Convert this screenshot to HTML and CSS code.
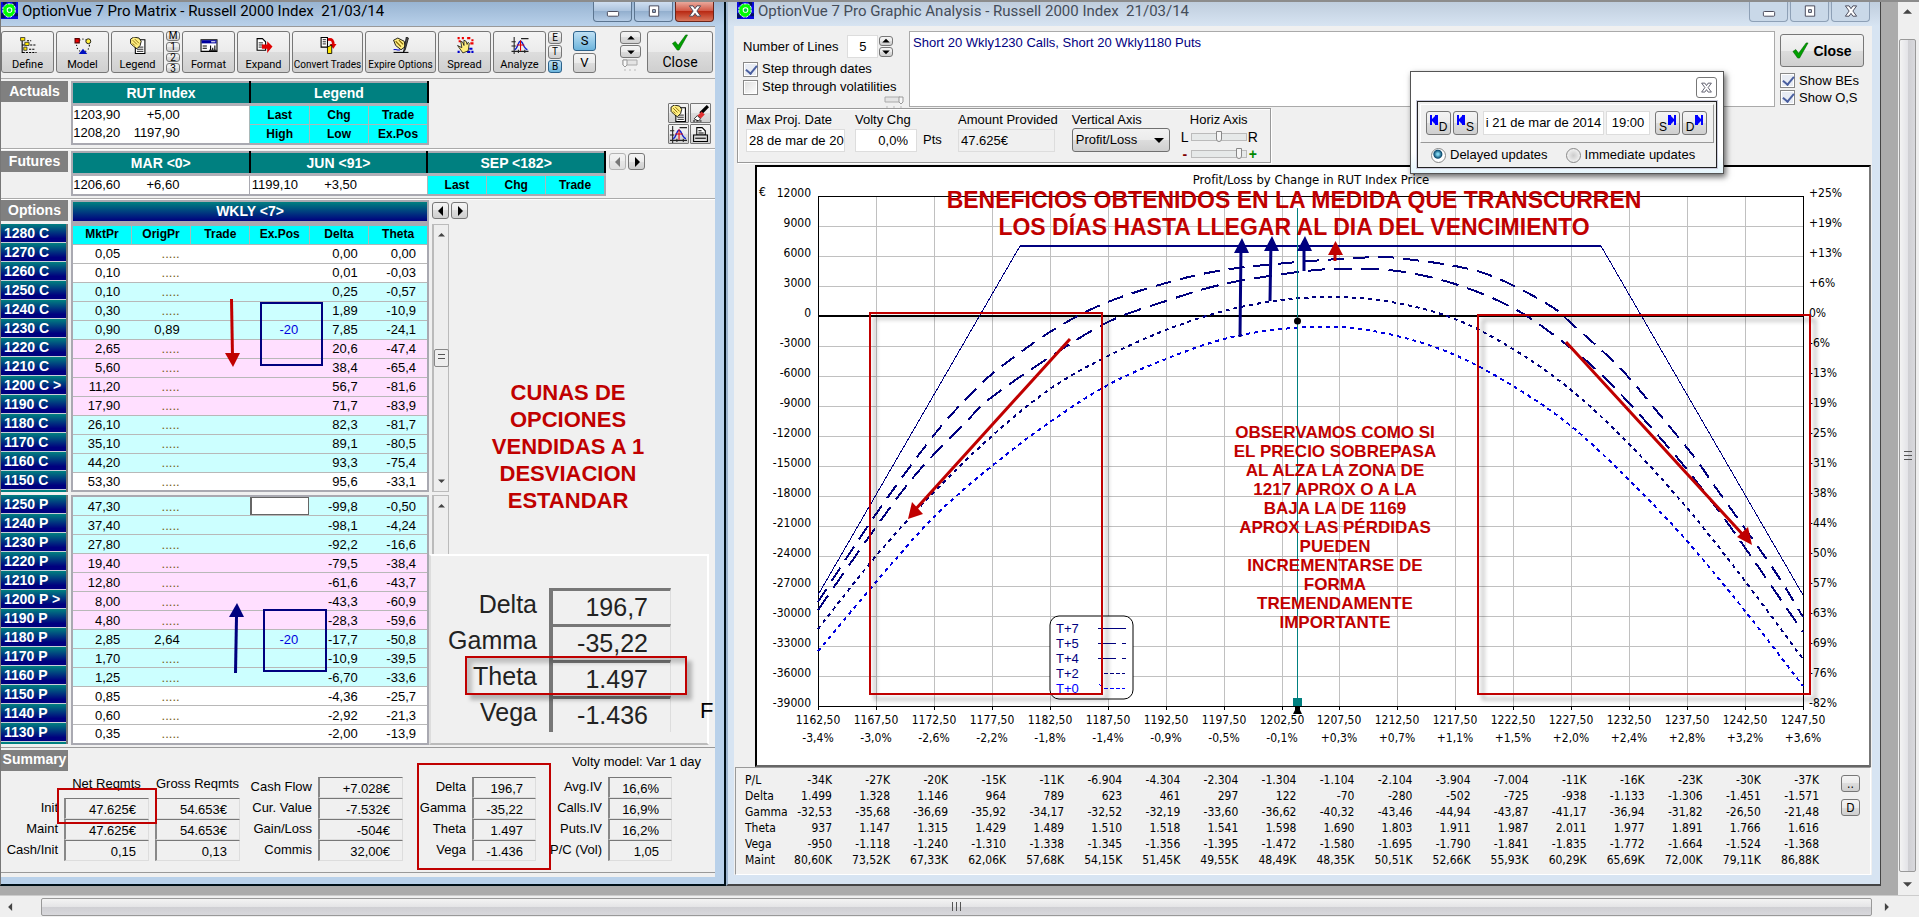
FILE: index.html
```html
<!DOCTYPE html>
<html lang="es">
<head>
<meta charset="utf-8">
<title>OptionVue 7 Pro</title>
<link rel="stylesheet" href="styles.css">
</head>
<body>
<svg class="sprite" aria-hidden="true">
  <symbol id="logo" viewBox="0 0 18 18"><rect width="18" height="18" fill="#0a0ae0"/><path d="M2 0h4v3H2zM12 0h4v4h-4zM0 12h4v5H0zM14 12h4v3h-4z" fill="#001060"/><path d="M4 4l2-2h6l2 2 1 2v5l-2 3-3 2H7l-3-2-2-3V6z" fill="#0f0" stroke="#fff" stroke-width="1" stroke-dasharray="3 1"/><circle cx="9" cy="8.500" r="3" fill="#fff"/><circle cx="9" cy="8.500" r="2" fill="#00d040"/></symbol>
  <symbol id="i-define" viewBox="0 0 16 16"><path d="M2.500 3v11M2 7.500h3M2 14.500h3" stroke="#000" fill="none"/><path d="M1 .5h4v3H1zM5 5h4v3H5zM4 9.500h3v3H4z" fill="#ffe600" stroke="#333" stroke-width=".8"/><path d="M7 3.500h4M10 7.500h6M9 11.500h5M6 14.500h10" stroke="#000" stroke-dasharray="2 1"/></symbol>
  <symbol id="i-model" viewBox="0 0 16 16"><circle cx="8" cy="8" r="6" fill="none" stroke="#000" stroke-dasharray="1 2"/><path d="M.5 1.500h4v4h-4z" fill="#e00" stroke="#500"/><circle cx="13" cy="4" r="2.300" fill="#ffef40" stroke="#000" stroke-width=".8"/><path d="M8 11l4 5H4z" fill="#0010c0"/></symbol>
  <symbol id="i-legend" viewBox="0 0 16 16"><path d="M5.500 2.500h9v13h-9z" fill="#fff" stroke="#000"/><path d="M7 9.500h6M7 11.500h6M7 13.500h6" stroke="#000" stroke-width=".8"/><path d="M1 2l3-2 5 1 2 3-1 4-3 3-3-2-3-3z" fill="#ffee80" stroke="#000" stroke-width=".8"/><path d="M3 3l4 4M5 2l4 4M3 6l2 2" stroke="#806000" stroke-width=".8"/></symbol>
  <symbol id="i-format" viewBox="0 0 16 16"><path d="M.5 2.500h15v11H.5z" fill="#fff" stroke="#000"/><path d="M1 3h14v3H1z" fill="#0000a0"/><path d="M10 4.500h4" stroke="#fff"/><path d="M2 8.500h4M2 10.500h4M9.500 8v4M11.500 10v2M13.500 8v4M8 12.500h7" stroke="#000"/></symbol>
  <symbol id="i-expand" viewBox="0 0 16 16"><path d="M1.500 1.500h5l3 3v8h-8z" fill="#fff" stroke="#000"/><path d="M3 5.500h4M3 7.500h4M3 9.500h3" stroke="#000" stroke-width=".8"/><path d="M6 7h5V4l5 5-5 6v-4H6z" fill="#e00000"/></symbol>
  <symbol id="i-convert" viewBox="0 0 16 16"><path d="M1.500 .5h6v9h-6z" fill="#fff" stroke="#000"/><path d="M3 2.500h3M3 4.500h3M3 6.500h3" stroke="#000" stroke-width=".8"/><path d="M8 2.500c4-1 5 1 5 5" stroke="#d00" stroke-width="2.500" fill="none"/><path d="M9.500 6.500H16l-3 4.500z" fill="#d00"/><path d="M7.500 9.500l4-2v8h-4z" fill="#ffe600" stroke="#000" stroke-width=".8"/></symbol>
  <symbol id="i-expire" viewBox="0 0 16 16"><path d="M1 3l4-2 6 3 1 5-4 3-5-4z" fill="#ffee80" stroke="#000" stroke-width=".8"/><path d="M3 4l5 5M6 3l4 4" stroke="#806000"/><path d="M13 0l2 1-3 11-2 3 1-4z" fill="#555" stroke="#000" stroke-width=".7"/><path d="M1 14.500h14" stroke="#000"/><path d="M1 12c2-1 4 1 6 0" fill="none" stroke="#00c"/></symbol>
  <symbol id="i-spread" viewBox="0 0 16 16"><path d="M1 1h2M5 1h2M10 1h3M14 3h2M2 4h2M13 6h3" stroke="#e00" stroke-width="2"/><path d="M12 11h3M10 14h3M14 14h2M1 14h2" stroke="#00c" stroke-width="2"/><path d="M1 8l4 2-1-6 2 1 1 3V3l2 1 1 3 1-2 1 1-1 7-5 2z" fill="#ffee80" stroke="#000" stroke-width=".7"/></symbol>
  <symbol id="i-analyze" viewBox="0 0 16 16"><path d="M2.500 0v16M0 13.500h16M0 4.500h4M0 8.500h4M6.500 12v3M12.500 12v3M9 1.500h7" stroke="#222" fill="none"/><path d="M3 12c3-1 3-8 5.500-8S11 11 15 12" stroke="#1020d0" fill="none" stroke-width="1.300"/><path d="M8.500 3v10M5 7.500h7" stroke="#e00000"/></symbol>
  <symbol id="i-eraser" viewBox="0 0 16 16"><path d="M15 1L8 8" stroke="#000" stroke-width="3"/><path d="M9 6l3 3-4 4-3-3z" fill="#e03030"/><path d="M5 10l3 3-2 2-4-2z" fill="#fff" stroke="#000" stroke-width=".7"/><path d="M1 15h9" stroke="#000" stroke-dasharray="2 1"/></symbol>
  <symbol id="i-printer" viewBox="0 0 16 16"><path d="M4.500 1.500h5l3 3v4h-8z" fill="#fff" stroke="#000"/><path d="M6 4.500h3M6 6.500h5" stroke="#000"/><path d="M1.500 8.500h13v6h-13z" fill="#ddd" stroke="#000"/><path d="M3 11.500h10" stroke="#000"/></symbol>
  <symbol id="i-check" viewBox="0 0 18 18"><path d="M1 10l3-2 3 4L15 1h2L8 17H6z" fill="#00a000" stroke="#006000" stroke-width=".6"/></symbol>
  <symbol id="i-min" viewBox="0 0 16 16"><rect x="2" y="8" width="12" height="5" rx="1" fill="#fff" stroke="#445"/></symbol>
  <symbol id="i-max" viewBox="0 0 16 16"><path d="M3 2h10v11H3zM6.500 6v3h3V6z" fill="#fff" fill-rule="evenodd" stroke="#445"/></symbol>
  <symbol id="i-x" viewBox="0 0 16 16"><path d="M2 2h4l2 3 2-3h4l-4 5.500 4 5.500h-4l-2-3-2 3H2l4-5.500z" fill="#fff" stroke="#445"/></symbol>
  <symbol id="i-left" viewBox="0 0 8 10"><path d="M6 0v10L1 5z"/></symbol>
  <symbol id="i-right" viewBox="0 0 8 10"><path d="M2 0v10l5-5z"/></symbol>
  <symbol id="i-up" viewBox="0 0 10 8"><path d="M0 6h10L5 1z"/></symbol>
  <symbol id="i-down" viewBox="0 0 10 8"><path d="M0 2h10L5 7z"/></symbol>
  <symbol id="i-skipback" viewBox="0 0 9 10"><path d="M0 0h2v4l3-3V0h3v10H5V9L2 6v4H0z" fill="#00f"/></symbol>
  <symbol id="i-skipfwd" viewBox="0 0 9 10"><path d="M9 0H7v4L4 1V0H1v10h3V9l3-3v4h2z" fill="#00f"/></symbol>
</svg>

<div class="desktop">
  <main class="workspace">

    <section class="window matrix">
      <header class="titlebar">
        <svg class="logo"><use href="#logo"/></svg>
        <h1>OptionVue 7 Pro Matrix - Russell 2000 Index&nbsp; 21/03/14</h1>
        <div class="winbtns">
          <button aria-label="Minimize"><svg><use href="#i-min"/></svg></button>
          <button aria-label="Maximize"><svg><use href="#i-max"/></svg></button>
          <button class="danger" aria-label="Close window"><svg><use href="#i-x"/></svg></button>
        </div>
      </header>
      <div class="client">
        <nav class="toolbar">
          <button class="tool"><svg><use href="#i-define"/></svg>Define</button>
          <button class="tool"><svg><use href="#i-model"/></svg>Model</button>
          <button class="tool"><svg><use href="#i-legend"/></svg>Legend</button>
          <div class="mini four"><button>M</button><button>1</button><button>2</button><button>3</button></div>
          <button class="tool"><svg><use href="#i-format"/></svg>Format</button>
          <button class="tool"><svg><use href="#i-expand"/></svg>Expand</button>
          <button class="tool wide"><svg><use href="#i-convert"/></svg>Convert Trades</button>
          <button class="tool wide"><svg><use href="#i-expire"/></svg>Expire Options</button>
          <button class="tool"><svg><use href="#i-spread"/></svg>Spread</button>
          <button class="tool"><svg><use href="#i-analyze"/></svg>Analyze</button>
          <div class="mini"><button>E</button><button>T</button><button class="on">B</button></div>
          <div class="sv"><button class="on">S</button><button>V</button></div>
          <div class="steps">
            <button aria-label="Up"><svg><use href="#i-up"/></svg></button>
            <button aria-label="Down"><svg><use href="#i-down"/></svg></button>
            <svg class="tick" viewBox="0 0 20 12"><path d="M3 1h14v5H3z" fill="#e4e4e4" stroke="#aaa"/><path d="M3 1h4v5l-2 2-2-2z" fill="#f8f8f8" stroke="#999"/><path d="M5 10v2M10 10v2M15 10v2" stroke="#bbb"/></svg>
          </div>
          <button class="tool closebtn"><svg><use href="#i-check"/></svg>Close</button>
        </nav>

        <section class="band actuals">
          <h2>Actuals</h2>
          <table class="quotes six">
            <thead><tr><th colspan="3">RUT Index</th><th colspan="3">Legend</th></tr></thead>
            <tbody>
              <tr><td>1203,90</td><td>+5,00</td><td></td><td class="key">Last</td><td class="key">Chg</td><td class="key">Trade</td></tr>
              <tr><td>1208,20</td><td>1197,90</td><td></td><td class="key">High</td><td class="key">Low</td><td class="key">Ex.Pos</td></tr>
            </tbody>
          </table>
          <div class="quad">
            <button aria-label="Legend"><svg><use href="#i-legend"/></svg></button>
            <button aria-label="Clear"><svg><use href="#i-eraser"/></svg></button>
            <button aria-label="Graph"><svg><use href="#i-analyze"/></svg></button>
            <button aria-label="Print"><svg><use href="#i-printer"/></svg></button>
          </div>
        </section>

        <section class="band futures">
          <h2>Futures</h2>
          <table class="quotes nine">
            <thead><tr><th colspan="3">MAR &lt;0&gt;</th><th colspan="3">JUN &lt;91&gt;</th><th colspan="3">SEP &lt;182&gt;</th></tr></thead>
            <tbody><tr><td>1206,60</td><td>+6,60</td><td class="edge"></td><td>1199,10</td><td>+3,50</td><td></td><td class="key">Last</td><td class="key">Chg</td><td class="key">Trade</td></tr></tbody>
          </table>
          <div class="pager"><button disabled aria-label="Previous"><svg><use href="#i-left"/></svg></button><button aria-label="Next"><svg><use href="#i-right"/></svg></button></div>
        </section>

        <section class="options">
          <h2>Options</h2>
          <h3 class="expiry">WKLY &lt;7&gt;</h3>
          <div class="pager"><button aria-label="Previous expiry"><svg><use href="#i-left"/></svg></button><button aria-label="Next expiry"><svg><use href="#i-right"/></svg></button></div>
          <ul class="strikes" id="call-strikes"></ul>
          <table class="chain">
            <thead><tr><th>MktPr</th><th>OrigPr</th><th>Trade</th><th>Ex.Pos</th><th>Delta</th><th>Theta</th></tr></thead>
            <tbody id="calls"></tbody>
          </table>
          <div class="vbar"><svg><use href="#i-up"/></svg><span class="grip"></span><svg><use href="#i-down"/></svg></div>
          <p class="note">CUNAS DE OPCIONES VENDIDAS A 1 DESVIACION ESTANDAR</p>
          <ul class="strikes" id="put-strikes"></ul>
          <table class="chain"><tbody id="puts"></tbody></table>
          <div class="vbar"><svg><use href="#i-up"/></svg></div>

          <svg class="marks" viewBox="0 0 430 548" width="430" height="548">
            <g fill="none" stroke="#00007f" stroke-width="2"><path d="M260 104h61v62h-61z"/><path d="M263 411h62v61h-62z"/></g>
            <path d="M230.500 100l1 58" stroke="#c00000" stroke-width="3"/><path d="M224 154h15l-7 14z" fill="#c00000"/>
            <path d="M234.500 474l1-56" stroke="#00007f" stroke-width="3"/><path d="M228 418h15l-7-14z" fill="#00007f"/>
          </svg>
          <div class="zoomed">
            <dl>
              <dt>Delta</dt><dd>196,7</dd>
              <dt>Gamma</dt><dd>-35,22</dd>
              <dt>Theta</dt><dd>1.497</dd>
              <dt>Vega</dt><dd>-1.436</dd>
            </dl>
            <span class="cut">F</span>
            <div class="hilite"></div>
          </div>
        </section>

        <section class="summary">
          <div class="sumhead"><h2>Summary</h2><p>Volty model: Var 1 day</p></div>
          <div class="fields">
            <span></span><span class="col">Net Reqmts</span><span class="col">Gross Reqmts</span><label for="cf">Cash Flow</label><output id="cf">+7.028€</output><label for="de">Delta</label><output id="de">196,7</output><label for="ai">Avg.IV</label><output id="ai">16,6%</output>
            <label for="ni">Init</label><output id="ni">47.625€</output><output>54.653€</output><label for="cv">Cur. Value</label><output id="cv">-7.532€</output><label for="ga">Gamma</label><output id="ga">-35,22</output><label for="ci">Calls.IV</label><output id="ci">16,9%</output>
            <label for="nm">Maint</label><output id="nm">47.625€</output><output>54.653€</output><label for="gl">Gain/Loss</label><output id="gl">-504€</output><label for="th">Theta</label><output id="th">1.497</output><label for="pi">Puts.IV</label><output id="pi">16,2%</output>
            <label for="nc">Cash/Init</label><output id="nc">0,15</output><output>0,13</output><label for="cm">Commis</label><output id="cm">32,00€</output><label for="ve">Vega</label><output id="ve">-1.436</output><label for="pc">P/C (Vol)</label><output id="pc">1,05</output>
          </div>
          <div class="frame net"></div>
          <div class="frame greeks"></div>
        </section>
      </div>
    </section>

    <section class="window analysis">
      <header class="titlebar">
        <svg class="logo"><use href="#logo"/></svg>
        <h1>OptionVue 7 Pro Graphic Analysis - Russell 2000 Index&nbsp; 21/03/14</h1>
        <div class="winbtns">
          <button aria-label="Minimize"><svg><use href="#i-min"/></svg></button>
          <button aria-label="Maximize"><svg><use href="#i-max"/></svg></button>
          <button aria-label="Close window"><svg><use href="#i-x"/></svg></button>
        </div>
      </header>
      <div class="client">
        <div class="setup">
          <div class="lines">
            <div class="numrow">
              <label for="nlines">Number of Lines</label>
              <input id="nlines" type="text" value="5">
              <div class="spin"><button aria-label="More"><svg><use href="#i-up"/></svg></button><button aria-label="Fewer"><svg><use href="#i-down"/></svg></button></div>
            </div>
            <label class="tickrow"><input type="checkbox" checked>Step through dates</label>
            <label class="tickrow"><input type="checkbox">Step through volatilities</label>
            <svg class="knob" viewBox="0 0 20 12"><path d="M1 1h15v5H1z" fill="#e4e4e4" stroke="#aaa"/><path d="M15 1h4v5l-2 2-2-2z" fill="#f8f8f8" stroke="#999"/><path d="M3 10v2M10 10v2M17 10v2" stroke="#bbb"/></svg>
          </div>
          <textarea class="memo" aria-label="Position" spellcheck="false">Short 20 Wkly1230 Calls, Short 20 Wkly1180 Puts</textarea>
          <div class="side">
            <button class="bigclose"><svg><use href="#i-check"/></svg>Close</button>
            <label class="tickrow"><input type="checkbox" checked>Show BEs</label>
            <label class="tickrow"><input type="checkbox" checked>Show O,S</label>
          </div>
        </div>

        <div class="params">
          <div class="param date"><label for="pd">Max Proj. Date</label><input id="pd" type="text" value="28 de mar de 20"></div>
          <div class="param volty"><label for="vc">Volty Chg</label><div class="unit"><input id="vc" type="text" value="0,0%">Pts</div></div>
          <div class="param amount"><label for="ap">Amount Provided</label><input id="ap" type="text" value="47.625€" readonly></div>
          <div class="param axis"><label for="va">Vertical Axis</label><div class="pick"><select id="va"><option>Profit/Loss</option></select><svg><use href="#i-down"/></svg></div></div>
          <div class="param horiz"><span>Horiz Axis</span>
            <div class="slide"><b>L</b><input type="range" min="0" max="100" value="50" aria-label="Horizontal shift"><b>R</b></div>
            <div class="slide"><b class="minus">-</b><input type="range" min="0" max="100" value="92" aria-label="Horizontal zoom"><b class="plus">+</b></div>
          </div>
        </div>

        <div class="chart">
          <svg id="plot" viewBox="757 167 1112 598" role="img" aria-label="Profit/Loss by Change in RUT Index Price">
            <defs><filter id="drop" x="-10%" y="-10%" width="120%" height="120%"><feDropShadow dx="5" dy="5" stdDeviation="2" flood-color="#000" flood-opacity=".35"/></filter></defs>
            <g id="grid"></g>
            <text class="axt mid head" x="1311" y="184">Profit/Loss by Change in RUT Index Price</text>
            <text class="axt" x="759" y="196">€</text>
            <g fill="none" stroke="#00007f" shape-rendering="crispEdges">
              <path stroke-width="1" d="M818 595L1020 246M1601 246L1803 595"/>
              <path stroke-width="2" d="M1020 246H1601"/>
              <path id="t5" stroke-width="2" stroke-dasharray="16 9"/>
              <path id="t4" stroke-width="2" stroke-dasharray="18 9"/>
              <path id="t2" stroke-width="2" stroke-dasharray="4 4"/>
              <path id="t0" stroke="#0000e0" stroke-width="2" stroke-dasharray="4 4"/>
            </g>
            <path d="M1297.500 208V700" stroke="#008080"/>
            <circle cx="1297.500" cy="321" r="3.500"/>
            <path d="M1293 698h9v8h-9z" fill="#008080"/><path d="M1295 707h5v3l2 4h-9l2-4z"/>
            <g class="key">
              <rect x="1050" y="616" width="83" height="83" rx="9" fill="#fff" stroke="#000"/>
              <text x="1056" y="633">T+7</text><text x="1056" y="648">T+5</text><text x="1056" y="663">T+4</text><text x="1056" y="678">T+2</text><text x="1056" y="693" class="now">T+0</text>
              <path d="M1098 628.500h28M1098 643.500h18m6 0h4M1098 658.500h18m6 0h4" stroke="#00007f" fill="none"/>
              <path d="M1104 673.500h21" stroke="#00007f" stroke-dasharray="4 2"/><path d="M1104 688.500h21" stroke="#00f" stroke-dasharray="4 2"/><path d="M1099 684l2 2" stroke="#00f"/>
            </g>
            <g class="say big"><text x="1294" y="208">BENEFICIOS OBTENIDOS EN LA MEDIDA QUE TRANSCURREN</text><text x="1294" y="235">LOS DÍAS HASTA LLEGAR AL DIA DEL VENCIMIENTO</text></g>
            <g class="say" id="warn"></g>
            <g fill="none" stroke="#c00000" stroke-width="2" filter="url(#drop)"><path d="M870 313h232v381H870z"/><path d="M1478 315h332v379h-332z"/></g>
            <g stroke="#c00000" stroke-width="3"><path d="M1070 339L914 511M1566 342l179 195"/><path d="M1335 261v-12" /></g>
            <path d="M908 519l4-17 11 12zM1752 545l-15-8 11-10zM1328 255h15l-7.500-14z" fill="#c00000"/>
            <g stroke="#00007f" stroke-width="3"><path d="M1240 337l1-90M1270 301l1-60M1304 271v-30"/></g>
            <path d="M1234 253h15l-7-15zM1264 251h15l-7-15zM1297 251h15l-7-15z" fill="#00007f"/>
          </svg>
        </div>

        <div class="risk">
          <table><tbody id="risk"></tbody></table>
          <div class="riskbtns"><button>..</button><button>D</button></div>
        </div>
      </div>

      <aside class="popup">
        <button class="dismiss" aria-label="Close panel"><svg><use href="#i-x"/></svg></button>
        <div class="inner">
          <div class="stepper">
            <button aria-label="Back one day"><svg><use href="#i-skipback"/></svg><sub>D</sub></button>
            <button aria-label="Back one step"><svg><use href="#i-skipback"/></svg><sub>S</sub></button>
            <input class="day" type="text" value="i 21 de mar de 2014" aria-label="Date">
            <input class="hour" type="text" value="19:00" aria-label="Time">
            <button aria-label="Forward one step"><sub>S</sub><svg><use href="#i-skipfwd"/></svg></button>
            <button aria-label="Forward one day"><sub>D</sub><svg><use href="#i-skipfwd"/></svg></button>
          </div>
          <div class="radios">
            <label><input type="radio" name="upd" checked>Delayed updates</label>
            <label><input type="radio" name="upd">Immediate updates</label>
          </div>
        </div>
      </aside>
    </section>
  </main>

  <div class="deskbar vertical"><svg><use href="#i-up"/></svg><span class="thumb"><i></i></span><svg><use href="#i-down"/></svg></div>
  <div class="deskbar horizontal"><svg><use href="#i-left"/></svg><span class="thumb"><i></i></span><svg><use href="#i-right"/></svg></div>
</div>
<script src="app.js"></script>
</body>
</html>
```

FILE: styles.css
```css
* { box-sizing: border-box; }
html, body { margin: 0; height: 100%; }
body { font: 13px/16px "Liberation Sans", Arial, sans-serif; color: #000; background: #ababab; }
h1, h2, h3, p, ul, dl, dd { margin: 0; padding: 0; font-weight: normal; }
ul { list-style: none; }
table { border-collapse: collapse; table-layout: fixed; }
td, th { padding: 0; }
button, input, select, textarea { font: inherit; color: inherit; margin: 0; padding: 0; }
button { display: flex; align-items: center; justify-content: center; border: 1px solid #777; border-radius: 3px; background: linear-gradient(#f4f4f4, #ebebeb 50%, #dddddd 50%, #cfcfcf); }
svg { display: block; flex: none; }
.sprite { position: absolute; width: 0; height: 0; }

.desktop { display: grid; grid-template-columns: 1fr 21px; grid-template-rows: 1fr 22px; min-height: 100vh; border-top: 2px solid #8c8c8c; }
.workspace { display: grid; grid-template-columns: minmax(0, 726fr) minmax(0, 1155fr); padding: 0 17px 9px 0; }
.window { display: flex; flex-direction: column; position: relative; min-width: 0; }
.matrix { background: #b9d1ea; border-left: 1px solid #777; border-right: 2px solid #001018; border-bottom: 2px solid #001018; padding: 0 9px 7px 0; }
.analysis { background: #d7e4f2; border-left: 2px solid #9fb6cf; border-right: 1px solid #444; border-bottom: 2px solid #444; padding: 0 8px 9px 6px; }
.client { flex: 1; background: #f0f0f0; }

.titlebar { display: flex; height: 24px; align-items: flex-start; gap: 4px; }
.matrix .titlebar { background: linear-gradient(#98b4d2, #b9d1ea); margin-right: -9px; }
.analysis .titlebar { background: linear-gradient(#bfcddd, #d7e4f2); margin-left: -6px; padding-left: 9px; color: #444c58; margin-right: -8px; }
.titlebar h1 { flex: 1; font: 15px/19px Roboto, "Open Sans", sans-serif; white-space: nowrap; }
.logo { width: 17px; height: 17px; }
.winbtns { display: flex; gap: 2px; margin-right: 10px; }
.winbtns button { width: 39px; height: 20px; border: 1px solid #5c7590; border-top: 0; border-radius: 0 0 4px 4px; background: linear-gradient(#cfdef0, #a9c1dc 50%, #93afce 50%, #b5cce6); }
.analysis .winbtns button { background: #c9d8e8; border-color: #8ea0b6; }
.winbtns svg { width: 16px; height: 15px; }
.winbtns .danger { background: linear-gradient(#e9a89b, #cf5240 50%, #b92a14 50%, #d8765c); border-color: #6b2418; }

.toolbar { display: flex; align-items: flex-start; gap: 2px; height: 53px; padding: 5px 2px 0 0; border-bottom: 1px solid #aaa; box-shadow: inset 0 1px #999; }
.tool { flex-direction: column; gap: 4px; width: 53px; height: 42px; font: 11px/13px Roboto, "Open Sans", sans-serif; white-space: nowrap; padding-top: 3px; }
.tool svg { width: 18px; height: 17px; }
.tool.wide { width: 71px; font-size: 10px; }
.mini { display: flex; flex-direction: column; gap: 1px; width: 14px; height: 42px; }
.mini button { flex: 1; min-height: 0; font: 10px/9px Roboto, sans-serif; border-radius: 3px; }
.on { background: linear-gradient(#bfe0f4, #6cb4dc); border-color: #2c628b; }
.sv { display: flex; flex-direction: column; gap: 2px; margin-left: 9px; width: 23px; }
.sv button { height: 20px; font: 13px/16px Roboto, sans-serif; }
.steps { display: flex; flex-direction: column; gap: 1px; width: 21px; margin-left: auto; }
.steps button { height: 13px; }
.steps button svg { width: 8px; height: 6px; }
.steps .tick { width: 20px; height: 12px; }
.closebtn { width: 66px; margin-left: 4px; font-size: 14px; line-height: 16px; gap: 3px; padding: 0; }

h2 { background: #808080; color: #fff; font: bold 14px/20px "Liberation Sans", Arial, sans-serif; text-align: center; width: 67px; height: 21px; }
.band { display: grid; grid-template-columns: 67px auto 1fr; column-gap: 3px; align-items: start; padding-top: 2px; border-bottom: 1px solid #aaa; box-shadow: 0 1px #fff; }
.actuals { height: 70px; }
.futures { height: 50px; }
.quotes { border: 2px solid #a9a9b1; background: #fff; }
.six { width: 358px; }
.nine { width: 535px; }
.quotes th { height: 22px; background: #008080; color: #fff; font-size: 14px; line-height: 18px; border-right: 2px solid #000; border-bottom: 3px solid #b0b0b8; }
.quotes td { height: 20px; text-align: right; padding-right: 11px; line-height: 18px; }
.quotes tr + tr td { height: 19px; }
.quotes .key { background: #0ff; text-align: center; padding: 0; font-weight: bold; font-size: 12px; border: 1px solid #a9b9b9; }
.quotes .edge { border-right: 1px solid #a9a9b1; }
.quad { justify-self: end; display: grid; grid-template-columns: 21px 21px; gap: 1px; margin: 22px 4px 0 0; }
.quad button { height: 20px; border-radius: 1px; }
.quad svg { width: 17px; height: 17px; }
.pager { display: flex; gap: 2px; padding-top: 2px; }
.pager button { width: 17px; height: 17px; }
.pager svg { width: 8px; height: 10px; }
.pager button:disabled { opacity: .5; }

.options { position: relative; display: grid; grid-template-columns: 67px 358px 17px 1fr; column-gap: 3px; align-items: start; padding: 1px 0 2px; border-bottom: 1px solid #999; }
.options .pager { grid-column: 3 / 5; }
.expiry { background: linear-gradient(#008080, #00007f); color: #fff; text-align: center; font: bold 14px/19px "Liberation Sans", Arial, sans-serif; border: 2px solid #a9a9b1; border-bottom-width: 3px; height: 24px; }
.strikes { border-right: 2px solid #777; background: #008080; padding-bottom: 2px; grid-column: 1; }
.strikes li { height: 19px; padding-left: 3px; color: #fff; font: bold 14px/18px "Liberation Sans", Arial, sans-serif; background: linear-gradient(#008080, #00007f 80%); border-bottom: 1px solid #c8d0d8; white-space: nowrap; }
#put-strikes, #put-strikes ~ table, #put-strikes ~ .vbar { margin-top: 3px; }
.chain { width: 358px; border: 2px solid #a9a9b1; background: #fff; grid-column: 2; }
.chain th { height: 19px; background: #0ff; font-size: 12px; line-height: 17px; border: 1px solid #a9b9b9; }
.chain td { height: 19px; text-align: right; padding-right: 11px; line-height: 17px; border-bottom: 1px solid #b8b8b8; }
.chain .dots { color: #776020; }
.chain .pos { color: #00d; }
.cyan { background: #ccffff; }
.pink { background: #ffdfff; }
.chain input { display: block; width: 59px; height: 18px; border: 1px solid #666; border-left-width: 2px; background: #fff; margin: 0; }
.chain td.cell { padding: 0; }
.vbar { grid-column: 3; align-self: stretch; display: flex; flex-direction: column; justify-content: space-between; align-items: center; border: 1px solid #bbb; border-left-width: 2px; background: #eee; padding: 7px 0; }
.vbar svg { width: 7px; height: 6px; fill: #444; }
.grip { width: 15px; height: 18px; border: 1px solid #888; border-radius: 2px; background: repeating-linear-gradient(#555 0 1px, #eee 1px 4px) content-box; padding: 4px 3px; }
.note { grid-column: 4; grid-row: 2 / 4; color: #c00000; font: bold 22px/27px "Liberation Sans", Arial, sans-serif; text-align: center; width: 180px; margin: 155px 0 0 26px; }
.options #call-strikes, #call-strikes + .chain, #call-strikes + .chain + .vbar { grid-row: 2; }
.options #put-strikes, #put-strikes + .chain, #put-strikes + .chain + .vbar { grid-row: 3; }
.marks { position: absolute; left: 0; top: 0; pointer-events: none; }
.zoomed { position: absolute; left: 428px; top: 355px; width: 280px; height: 191px; background: #f0f0f0; border: 2px solid #fff; border-left-color: #ddd; border-bottom-color: #bbb; padding: 32px 0 0 8px; }
.zoomed dl { display: grid; grid-template-columns: 98px 122px; column-gap: 12px; font-size: 25px; line-height: 32px; color: #222; grid-auto-rows: 36px; }
.zoomed dt { text-align: right; }
.zoomed dd { text-align: right; padding-right: 22px; border-top: 3px solid #777; border-left: 4px solid #777; border-right: 1px solid #ddd; }
.cut { position: absolute; left: 269px; top: 138px; font-size: 22px; line-height: 34px; }
.hilite { position: absolute; left: 34px; top: 100px; width: 222px; height: 39px; border: 2px solid #c00000; box-shadow: 5px 5px 4px rgba(0,0,0,.25), inset 5px 5px 4px rgba(0,0,0,.2); }

.summary { position: relative; padding-top: 2px; border-bottom: 1px solid #999; height: 125px; }
.sumhead { display: flex; justify-content: space-between; padding-right: 14px; }
.sumhead h2 { line-height: 19px; }
.sumhead p { padding-top: 4px; }
.fields { display: grid; grid-template-columns: 55px 85px 85px 66px 85px 57px 64px 60px 64px; column-gap: 6px; grid-auto-rows: 21px; padding: 6px 0 0 2px; white-space: nowrap; }
.fields label { text-align: right; justify-self: end; line-height: 20px; }
.fields .col { text-align: center; line-height: 14px; }
.fields output { text-align: right; padding-right: 12px; line-height: 21px; border-top: 1px solid #777; border-left: 2px solid #888; border-right: 1px solid #ddd; border-bottom: 1px solid #ddd; }
.frame { position: absolute; border: 2px solid #c00000; }
.net { left: 56px; top: 40px; width: 100px; height: 36px; }
.greeks { left: 416px; top: 15px; width: 134px; height: 107px; }

.setup { display: grid; grid-template-columns: 167px 1fr 84px; column-gap: 5px; padding: 5px 8px 0 3px; height: 82px; }
.lines { padding: 4px 0 0 6px; position: relative; }
.numrow { display: flex; align-items: center; gap: 9px; }
.numrow input { width: 31px; height: 23px; text-align: center; border: 1px solid #ddd; background: #fff; }
.spin { display: flex; flex-direction: column; gap: 1px; width: 14px; margin-left: -8px; }
.spin button { height: 10px; }
.spin svg { width: 8px; height: 6px; }
.tickrow { display: flex; align-items: center; gap: 4px; height: 17px; white-space: nowrap; }
.lines .tickrow { height: 18px; }
.lines .tickrow:nth-of-type(1) { margin-top: 2px; }
input[type=checkbox] { appearance: none; width: 15px; height: 15px; border: 1px solid #888; background: linear-gradient(135deg, #ddd, #fff); box-shadow: inset 0 0 0 1px #fff; flex: none; }
input[type=checkbox]:checked { background: #e8ecf4; }
input[type=checkbox]:checked::after { content: ""; display: block; width: 5px; height: 9px; margin: 0 0 0 4px; border: solid #4a5fa0; border-width: 0 2px 2px 0; transform: rotate(40deg); }
.knob { position: absolute; right: 0; bottom: 0; width: 20px; height: 12px; }
.memo { resize: none; border: 1px solid #aaa; background: #fff; color: #00007f; padding: 3px; height: 76px; width: 100%; }
.side .bigclose { width: 84px; height: 33px; margin: 3px 0 5px; gap: 4px; font-weight: bold; font-size: 14px; }
.bigclose svg { width: 17px; height: 17px; }

.params { display: flex; gap: 10px; width: 534px; height: 55px; border: 1px solid #999; box-shadow: 1px 1px #fff, inset 1px 1px #fff; margin: 0 0 2px 3px; padding: 3px 8px 0; white-space: nowrap; }
.param label { display: block; }
.param input[type=text] { display: block; height: 23px; margin-top: 1px; border: 1px solid #ddd; background: #fff; }
.date input { width: 99px; padding-left: 2px; }
.volty { width: 93px; }
.unit { display: flex; align-items: center; gap: 6px; }
.volty input[type=text] { width: 62px; text-align: right; padding-right: 8px; }
.amount input[type=text] { width: 97px; background: #f0f0f0; padding-left: 2px; }
.axis { margin-left: 4px; }
.pick { position: relative; width: 98px; }
.pick select { appearance: none; width: 98px; height: 24px; padding-left: 3px; border: 1px solid #707070; border-radius: 3px; background: linear-gradient(#f2f2f2, #ebebeb 50%, #ddd 50%, #cfcfcf); }
.pick svg { position: absolute; right: 6px; top: 8px; width: 10px; height: 8px; pointer-events: none; }
.horiz { text-align: center; line-height: 16px; }
.slide { display: flex; align-items: center; gap: 1px; height: 17px; }
.slide b { font-weight: normal; width: 10px; font-size: 14px; }
.slide .minus { color: #800000; font-weight: bold; }
.slide .plus { color: #080; font-weight: bold; }
input[type=range] { appearance: none; width: 56px; height: 8px; border: 1px solid #bbb; background: #e6e9e9; }
input[type=range]::-webkit-slider-thumb { appearance: none; width: 6px; height: 11px; border: 1px solid #888; border-radius: 0 0 3px 3px; background: #f6f6f6; }

.chart { margin-left: 21px; margin-right: 1px; border: 2px solid #000; border-right-color: #777; border-bottom-color: #666; background: #fff; }
.chart > svg { width: 100%; height: auto; }
.axt { font: 12px "DejaVu Sans Condensed", "Open Sans", sans-serif; }
.head { font-size: 13px; }
.mid { text-anchor: middle; }
.end { text-anchor: end; }
.key text { font: 13px "Liberation Sans", Arial, sans-serif; fill: #00007f; }
.key .now { fill: #00f; }
.say text { font: bold 17px "Liberation Sans", Arial, sans-serif; fill: #c00000; text-anchor: middle; }
.say.big text { font-size: 23px; }

.risk { display: flex; border: 1px solid #999; border-right-color: #fff; border-bottom-color: #fff; padding: 4px 10px 6px 9px; margin: 0 1px; font: 12px/16px "DejaVu Sans Condensed", "Open Sans", sans-serif; }
.risk table { flex: 1; }
.risk tr { height: 16px; }
.risk th { text-align: left; font-weight: normal; width: 45px; }
.risk td { text-align: right; }
.risk td:nth-child(2) { width: 42px; }
.riskbtns { display: flex; flex-direction: column; gap: 7px; width: 19px; margin: 3px 0 0 22px; }
.riskbtns button { height: 17px; font-size: 12px; line-height: 12px; }

.popup { position: absolute; right: 156px; top: 69px; width: 314px; height: 103px; background: linear-gradient(#fff 80%, #e4f4fb); border: 1px solid #555; box-shadow: 2px 3px 6px rgba(0,0,0,.6); padding: 5px 6px 6px; }
.dismiss { width: 21px; height: 21px; margin-left: auto; background: #fff; }
.dismiss svg { width: 13px; height: 14px; }
.popup .inner { border: 1px solid #222; outline: 1px solid #ccd; background: #f0f0f0; height: 67px; margin-top: 3px; padding: 2px; }
.stepper { display: flex; align-items: center; gap: 2px; height: 39px; border: 1px solid #999; border-left-color: #fff; border-top-color: #fff; padding: 0 5px 2px; }
.stepper button { width: 25px; height: 24px; }
.stepper button svg { width: 9px; height: 10px; margin-bottom: 5px; }
.stepper sub { font-size: 12px; line-height: 12px; margin-top: 8px; vertical-align: baseline; }
.stepper input { height: 24px; border: 1px solid #ddd; background: #fff; text-align: center; }
.day { width: 121px; margin-left: 3px; }
.hour { width: 44px; margin-right: 3px; }
.radios { display: flex; gap: 18px; padding: 4px 0 0 11px; white-space: nowrap; }
.radios label { display: flex; align-items: center; gap: 4px; }
input[type=radio] { appearance: none; width: 15px; height: 15px; border: 1px solid #888; border-radius: 50%; background: radial-gradient(#ccc, #fff); }
input[type=radio]:checked { background: radial-gradient(circle at 45% 40%, #7fd4ee 0 1px, #0a4a70 4px, #fff 5px); }

.deskbar { display: flex; align-items: center; background: #efefef; }
.deskbar svg { width: 9px; height: 8px; fill: #444; }
.deskbar .thumb { flex: 1; border: 1px solid #999; border-radius: 2px; display: flex; align-items: center; justify-content: center; }
.vertical { flex-direction: column; padding: 6px 3px 7px 1px; gap: 8px; }
.vertical .thumb { width: 17px; margin-top: 15px; background: linear-gradient(90deg, #f3f3f3, #e4e4e8 50%, #cfcfd3 50%, #d8d8dc); }
.vertical i { width: 8px; height: 10px; background: repeating-linear-gradient(#555 0 1px, transparent 1px 4px); }
.horizontal { grid-column: 1 / 3; padding: 0 28px 0 6px; gap: 10px; border-top: 1px solid #ccc; }
.horizontal .thumb { height: 18px; margin-left: 16px; background: linear-gradient(#f3f3f3, #e4e4e6 50%, #cfcfd3 50%, #d8d8dc); }
.horizontal i { width: 10px; height: 9px; background: repeating-linear-gradient(90deg, #555 0 1px, transparent 1px 4px); }
```

FILE: app.js
```js
const calls = [
  ["1270 C", "0,05", "", "", "0,00", "0,00", ""],
  ["1260 C", "0,10", "", "", "0,01", "-0,03", ""],
  ["1250 C", "0,10", "", "", "0,25", "-0,57", "cyan"],
  ["1240 C", "0,30", "", "", "1,89", "-10,9", "cyan"],
  ["1230 C", "0,90", "0,89", "-20", "7,85", "-24,1", "cyan"],
  ["1220 C", "2,65", "", "", "20,6", "-47,4", "pink"],
  ["1210 C", "5,60", "", "", "38,4", "-65,4", "pink"],
  ["1200 C >", "11,20", "", "", "56,7", "-81,6", "pink"],
  ["1190 C", "17,90", "", "", "71,7", "-83,9", "pink"],
  ["1180 C", "26,10", "", "", "82,3", "-81,7", "cyan"],
  ["1170 C", "35,10", "", "", "89,1", "-80,5", "cyan"],
  ["1160 C", "44,20", "", "", "93,3", "-75,4", "cyan"],
  ["1150 C", "53,30", "", "", "95,6", "-33,1", ""]
];
const puts = [
  ["1250 P", "47,30", "", "edit", "-99,8", "-0,50", "cyan"],
  ["1240 P", "37,40", "", "", "-98,1", "-4,24", "cyan"],
  ["1230 P", "27,80", "", "", "-92,2", "-16,6", "cyan"],
  ["1220 P", "19,40", "", "", "-79,5", "-38,4", "pink"],
  ["1210 P", "12,80", "", "", "-61,6", "-43,7", "pink"],
  ["1200 P >", "8,00", "", "", "-43,3", "-60,9", "pink"],
  ["1190 P", "4,80", "", "", "-28,3", "-59,6", "pink"],
  ["1180 P", "2,85", "2,64", "-20", "-17,7", "-50,8", "cyan"],
  ["1170 P", "1,70", "", "", "-10,9", "-39,5", "cyan"],
  ["1160 P", "1,25", "", "", "-6,70", "-33,6", "cyan"],
  ["1150 P", "0,85", "", "", "-4,36", "-25,7", ""],
  ["1140 P", "0,60", "", "", "-2,92", "-21,3", ""],
  ["1130 P", "0,35", "", "", "-2,00", "-13,9", ""]
];
const byId = id => document.getElementById(id);

function chainRow([strike, mkt, orig, pos, delta, theta, tone]) {
  const posCell = pos === "edit"
    ? '<td class="cell"><input type="text" aria-label="Position ' + strike + '"></td>'
    : '<td class="pos">' + pos + "</td>";
  return `<tr class="${tone}"><td>${mkt}</td><td class="${orig ? "" : "dots"}">${orig || "....."}</td><td></td>${posCell}<td>${delta}</td><td>${theta}</td></tr>`;
}
byId("calls").innerHTML = calls.map(chainRow).join("");
byId("puts").innerHTML = puts.map(chainRow).join("");
byId("call-strikes").innerHTML = ["1280 C", ...calls.map(r => r[0])].map(s => `<li>${s.replace(">", "&gt;")}</li>`).join("");
byId("put-strikes").innerHTML = puts.map(r => `<li>${r[0].replace(">", "&gt;")}</li>`).join("");

const risk = {
  "P/L": "-34K -27K -20K -15K -11K -6.904 -4.304 -2.304 -1.304 -1.104 -2.104 -3.904 -7.004 -11K -16K -23K -30K -37K",
  "Delta": "1.499 1.328 1.146 964 789 623 461 297 122 -70 -280 -502 -725 -938 -1.133 -1.306 -1.451 -1.571",
  "Gamma": "-32,53 -35,68 -36,69 -35,92 -34,17 -32,52 -32,19 -33,60 -36,62 -40,32 -43,46 -44,94 -43,87 -41,17 -36,94 -31,82 -26,50 -21,48",
  "Theta": "937 1.147 1.315 1.429 1.489 1.510 1.518 1.541 1.598 1.690 1.803 1.911 1.987 2.011 1.977 1.891 1.766 1.616",
  "Vega": "-950 -1.118 -1.240 -1.310 -1.338 -1.345 -1.356 -1.395 -1.472 -1.580 -1.695 -1.790 -1.841 -1.835 -1.772 -1.664 -1.524 -1.368",
  "Maint": "80,60K 73,52K 67,33K 62,06K 57,68K 54,15K 51,45K 49,55K 48,49K 48,35K 50,51K 52,66K 55,93K 60,29K 65,69K 72,00K 79,11K 86,88K"
};
byId("risk").innerHTML = Object.entries(risk).map(([name, row]) =>
  `<tr><th scope="row">${name}</th>${row.split(" ").map(v => `<td>${v}</td>`).join("")}</tr>`).join("");

const left = 818, right = 1803, top0 = 196, bottom = 706;
const stepX = (right - left) / 17;
const pctX = "-3,4% -3,0% -2,6% -2,2% -1,8% -1,4% -0,9% -0,5% -0,1% +0,3% +0,7% +1,1% +1,5% +2,0% +2,4% +2,8% +3,2% +3,6%".split(" ");
const pctY = "+25% +19% +13% +6% 0% -6% -13% -19% -25% -31% -38% -44% -50% -57% -63% -69% -76% -82%".split(" ");
let grid = "";
for (let i = 0; i < 18; i++) {
  const x = Math.round(left + i * stepX), y = top0 + i * 30;
  if (i > 0 && i < 17) grid += `<path d="M${x} ${top0}V${bottom}M${left} ${y}H${right}" stroke="#c0c0c0" shape-rendering="crispEdges"/>`;
  grid += `<path d="M${x} ${bottom}v4" stroke="#000" shape-rendering="crispEdges"/>`;
  grid += `<text class="axt mid" x="${x}" y="724">${(1162.5 + i * 5).toFixed(2).replace(".", ",")}</text>`;
  grid += `<text class="axt mid" x="${x}" y="742">${pctX[i]}</text>`;
  grid += `<text class="axt end" x="811" y="${y + 1}">${12000 - i * 3000}</text>`;
  grid += `<text class="axt" x="1809" y="${y + 1}">${pctY[i]}</text>`;
}
grid += `<g shape-rendering="crispEdges"><path d="M${left} ${top0}H${right}V${bottom}H${left}z" fill="none" stroke="#000"/><path d="M${left} 316H${right}" stroke="#000" stroke-width="2"/></g>`;
byId("grid").innerHTML = grid;

const curves = {
  t0: [[818,651],[876,582],[934,517],[992,466],[1050,422],[1108,385],[1166,359],[1224,339],[1282,329],[1340,327],[1397,336],[1455,355],[1513,386],[1571,426],[1629,480],[1687,541],[1745,611],[1803,686]],
  t2: [[818,629],[876,556],[934,492],[992,436],[1050,389],[1108,356],[1166,330],[1224,311],[1282,300],[1340,297],[1397,303],[1455,319],[1513,349],[1571,390],[1629,444],[1687,508],[1745,581],[1803,659]],
  t4: [[818,610],[876,527],[917,473],[963,425],[992,397],[1050,357],[1108,322],[1166,301],[1224,284],[1298,272],[1340,269],[1397,271],[1455,284],[1513,308],[1563,342],[1610,383],[1675,455],[1718,510],[1748,552],[1803,632]],
  t5: [[818,602],[876,514],[934,435],[972,393],[997,370],[1050,332],[1103,304],[1166,283],[1224,270],[1298,262],[1375,257],[1397,258],[1455,266],[1497,278],[1549,305],[1572,324],[1620,368],[1660,415],[1695,458],[1716,488],[1774,570],[1803,617]]
};
function smooth(points) {
  let d = "M" + points[0].join(" ");
  for (let i = 0; i < points.length - 1; i++) {
    const a = points[i - 1] || points[i], b = points[i], c = points[i + 1], e = points[i + 2] || c;
    d += `C${b[0] + (c[0] - a[0]) / 6} ${b[1] + (c[1] - a[1]) / 6} ${c[0] - (e[0] - b[0]) / 6} ${c[1] - (e[1] - b[1]) / 6} ${c[0]} ${c[1]}`;
  }
  return d;
}
for (const id in curves) byId(id).setAttribute("d", smooth(curves[id]));

byId("warn").innerHTML = ["OBSERVAMOS COMO SI", "EL PRECIO SOBREPASA", "AL ALZA LA ZONA DE", "1217 APROX O A LA", "BAJA LA DE 1169", "APROX LAS PÉRDIDAS", "PUEDEN", "INCREMENTARSE DE", "FORMA", "TREMENDAMENTE", "IMPORTANTE"]
  .map((t, i) => `<text x="1335" y="${438 + i * 19}">${t}</text>`).join("");
```
